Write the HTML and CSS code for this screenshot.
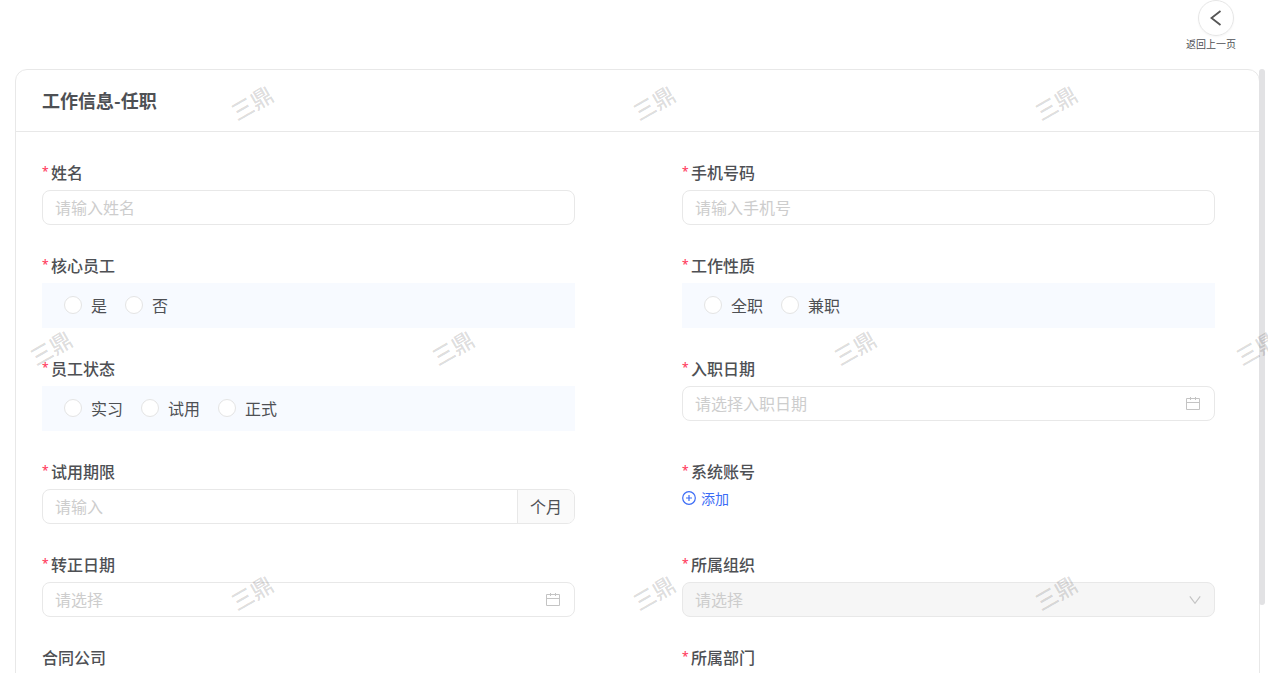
FILE: index.html
```html
<!DOCTYPE html>
<html lang="zh-CN">
<head>
<meta charset="utf-8">
<meta name="viewport" content="width=device-width, initial-scale=1">
<title>工作信息-任职</title>
<link rel="stylesheet" href="styles.css">
</head>
<body>
<div class="page">
  <header class="topbar">
    <button class="back" type="button">
      <span class="back-circle">
        <svg width="20" height="20" viewBox="0 0 20 20" fill="none" stroke="#555" stroke-width="1.800"><path d="M14.500 3 5.500 10l9 7"/></svg>
      </span>
      <span class="back-text">返回上一页</span>
    </button>
  </header>
  <main class="scroller">
    <section class="card">
      <h1 class="card-title">工作信息-任职</h1>
      <form class="form">
        <div class="item">
          <label class="label required" for="name">姓名</label>
          <input class="input" id="name" type="text" placeholder="请输入姓名">
        </div>
        <div class="item">
          <label class="label required" for="phone">手机号码</label>
          <input class="input" id="phone" type="tel" placeholder="请输入手机号">
        </div>
        <div class="item" role="radiogroup" aria-labelledby="core">
          <span class="label required" id="core">核心员工</span>
          <div class="radios">
            <label class="radio"><input type="radio" name="core">是</label>
            <label class="radio"><input type="radio" name="core">否</label>
          </div>
        </div>
        <div class="item" role="radiogroup" aria-labelledby="nature">
          <span class="label required" id="nature">工作性质</span>
          <div class="radios">
            <label class="radio"><input type="radio" name="nature">全职</label>
            <label class="radio"><input type="radio" name="nature">兼职</label>
          </div>
        </div>
        <div class="item" role="radiogroup" aria-labelledby="status">
          <span class="label required" id="status">员工状态</span>
          <div class="radios">
            <label class="radio"><input type="radio" name="status">实习</label>
            <label class="radio"><input type="radio" name="status">试用</label>
            <label class="radio"><input type="radio" name="status">正式</label>
          </div>
        </div>
        <div class="item">
          <label class="label required" for="entry">入职日期</label>
          <div class="field">
            <input class="field-input" id="entry" type="text" placeholder="请选择入职日期">
            <svg class="field-icon" width="16" height="16" viewBox="0 0 16 16" fill="none" stroke="currentColor"><path d="M1.500 2.500h13v11h-13zM1.500 6.500h13M5.500 1v3M10.500 1v3"/></svg>
          </div>
        </div>
        <div class="item">
          <label class="label required" for="trial">试用期限</label>
          <div class="field">
            <input class="field-input" id="trial" type="text" placeholder="请输入">
            <span class="addon">个月</span>
          </div>
        </div>
        <div class="item">
          <span class="label required">系统账号</span>
          <button class="add" type="button">
            <svg width="14" height="14" viewBox="0 0 14 14" fill="none" stroke="currentColor" stroke-width="1.200"><circle cx="7" cy="7" r="6.300"/><path d="M7 4v6M4 7h6"/></svg>
            添加
          </button>
        </div>
        <div class="item">
          <label class="label required" for="regular">转正日期</label>
          <div class="field">
            <input class="field-input" id="regular" type="text" placeholder="请选择">
            <svg class="field-icon" width="16" height="16" viewBox="0 0 16 16" fill="none" stroke="currentColor"><path d="M1.500 2.500h13v11h-13zM1.500 6.500h13M5.500 1v3M10.500 1v3"/></svg>
          </div>
        </div>
        <div class="item">
          <label class="label required" for="org">所属组织</label>
          <div class="field disabled">
            <select class="field-input" id="org" disabled><option>请选择</option></select>
            <svg class="field-icon" width="12" height="12" viewBox="0 0 12 12" fill="none" stroke="currentColor" stroke-width="1.200"><path d="M.8 2.300 6 9.300l5.200-7"/></svg>
          </div>
        </div>
        <div class="item">
          <label class="label" for="company">合同公司</label>
          <input class="input" id="company" type="text" placeholder="请选择">
        </div>
        <div class="item">
          <label class="label required" for="dept">所属部门</label>
          <input class="input" id="dept" type="text" placeholder="请选择">
        </div>
      </form>
    </section>
    <div class="scrollbar"></div>
  </main>
  <div class="watermark" aria-hidden="true">
    <div class="mark-row"><span class="mark">三鼎</span><span class="mark">三鼎</span><span class="mark">三鼎</span></div>
    <div class="mark-row shifted"><span class="mark">三鼎</span><span class="mark">三鼎</span><span class="mark">三鼎</span><span class="mark">三鼎</span></div>
    <div class="mark-row"><span class="mark">三鼎</span><span class="mark">三鼎</span><span class="mark">三鼎</span></div>
  </div>
</div>
</body>
</html>
```
FILE: styles.css
```css
* {
  box-sizing: border-box;
}

body {
  margin: 0;
  background: #fff;
  color: #4e5054;
  font-family: "Noto Sans CJK SC", sans-serif;
  font-size: 16px;
  line-height: 24px;
}

button,
input,
select {
  font: inherit;
  color: inherit;
}

.page {
  position: relative;
  display: flex;
  flex-direction: column;
  height: 100vh;
  overflow: hidden;
}

.topbar {
  display: flex;
  flex: none;
  justify-content: flex-end;
  padding: 0 32px 17px 0;
}

.back {
  display: flex;
  flex-direction: column;
  align-items: flex-end;
  padding: 0;
  border: 0;
  background: none;
  cursor: pointer;
}

.back-circle {
  display: flex;
  align-items: center;
  justify-content: center;
  width: 36px;
  height: 36px;
  margin-right: 2px;
  border: 1px solid #e6e6e6;
  border-radius: 50%;
  box-shadow: 0 1px 2px rgba(0, 0, 0, 0.04);
}

.back-text {
  font-size: 10px;
  line-height: 16px;
}

.scroller {
  position: relative;
  flex: 1;
  min-height: 0;
  padding: 0 8px 0 15px;
}

.card {
  border: 1px solid #e8e8e8;
  border-radius: 12px;
}

.card-title {
  margin: 0;
  padding: 17px 26px 18px;
  border-bottom: 1px solid #e8e8e8;
  font-size: 18px;
  font-weight: 700;
  line-height: 26px;
}

.form {
  display: grid;
  grid-template-columns: 1fr 1fr;
  gap: 29px 107px;
  padding: 29px 44px 29px 26px;
}

.item {
  display: flex;
  flex-direction: column;
  gap: 7px;
  min-width: 0;
}

.label {
  display: flex;
  font-weight: 500;
  line-height: 22px;
}

.required::before {
  content: "*";
  width: 9px;
  height: 22px;
  color: #ff3d5e;
  font-family: "Noto Sans", sans-serif;
  font-size: 12px;
  line-height: 22px;
}

.input,
.field {
  width: 100%;
  height: 35px;
  border: 1px solid #e8e8e8;
  border-radius: 8px;
  background: #fff;
}

.input {
  padding: 0 12px 2px;
}

.field {
  display: flex;
  align-items: center;
  overflow: hidden;
}

.field-input {
  flex: 1;
  min-width: 0;
  height: 100%;
  padding: 0 12px 2px;
  border: 0;
  background: none;
  appearance: none;
}

.input::placeholder,
.field-input::placeholder,
select.field-input {
  color: #cdcdcd;
  opacity: 1;
}

.field-icon {
  flex: none;
  margin-right: 13px;
  color: #c4c4c4;
}

.disabled {
  background: #f6f6f6;
}

.addon {
  display: flex;
  align-items: center;
  align-self: stretch;
  padding: 0 12px 2px;
  border-left: 1px solid #e8e8e8;
  background: #fafafa;
}

.radios {
  display: flex;
  align-items: center;
  gap: 18px;
  height: 45px;
  padding: 0 22px 2px;
  background: #f7faff;
}

.radio {
  display: flex;
  align-items: center;
  gap: 9px;
}

.radio input {
  width: 18px;
  height: 18px;
  margin: 0;
  border: 1px solid #e4e4e4;
  border-radius: 50%;
  background: #fff;
  appearance: none;
}

.radio input:checked {
  border: 5px solid #3b6cf6;
}

.add {
  display: flex;
  align-items: center;
  align-self: flex-start;
  gap: 5px;
  padding: 0;
  border: 0;
  background: none;
  color: #3b6cf6;
  font-size: 14px;
  line-height: 18px;
  cursor: pointer;
}

.scrollbar {
  position: absolute;
  top: 0;
  right: 3px;
  width: 6px;
  height: 536px;
  border-radius: 3px;
  background: #e2e2e4;
}

.watermark {
  position: absolute;
  inset: 0;
  overflow: hidden;
  pointer-events: none;
}

.mark-row {
  display: flex;
  height: 245px;
  padding-left: 50px;
}

.mark-row:first-child {
  margin-top: -21px;
}

.shifted {
  margin-left: -201px;
}

.mark {
  display: flex;
  flex: none;
  align-items: center;
  justify-content: center;
  width: 402px;
  color: rgba(0, 0, 0, 0.15);
  font-size: 22px;
  font-weight: 500;
  transform: rotate(-30deg);
}
```
